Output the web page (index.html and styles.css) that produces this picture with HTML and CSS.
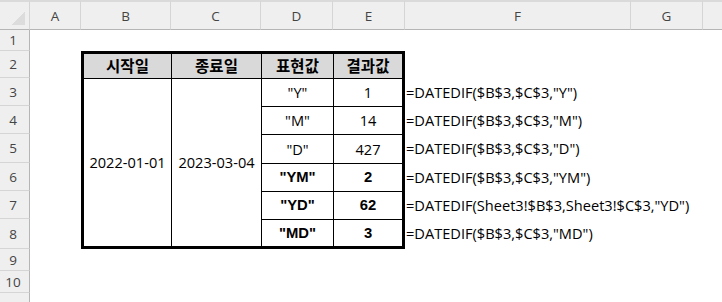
FILE: index.html
```html
<!DOCTYPE html>
<html lang="ko">
<head>
<meta charset="utf-8">
<link rel="stylesheet" href="styles.css">
</head>
<body>
<div class="sheet">
  <div class="corner"></div>
  <div class="colh">A</div>
  <div class="colh">B</div>
  <div class="colh">C</div>
  <div class="colh">D</div>
  <div class="colh">E</div>
  <div class="colh">F</div>
  <div class="colh">G</div>
  <div class="colh last"></div>

  <div class="rowh r1">1</div>
  <div class="rowh r2">2</div>
  <div class="rowh r3">3</div>
  <div class="rowh r4">4</div>
  <div class="rowh r5">5</div>
  <div class="rowh r6">6</div>
  <div class="rowh r7">7</div>
  <div class="rowh r8">8</div>
  <div class="rowh r9">9</div>
  <div class="rowh r10">10</div>
  <div class="rowh r11"></div>

  <div class="datatable">
    <div class="th">시작일</div>
    <div class="th">종료일</div>
    <div class="th">표현값</div>
    <div class="th">결과값</div>
    <div class="td merged">2022-01-01</div>
    <div class="td merged">2023-03-04</div>
    <div class="td">"Y"</div><div class="td">1</div>
    <div class="td">"M"</div><div class="td">14</div>
    <div class="td">"D"</div><div class="td">427</div>
    <div class="td b">"YM"</div><div class="td b">2</div>
    <div class="td b">"YD"</div><div class="td b">62</div>
    <div class="td b">"MD"</div><div class="td b">3</div>
  </div>

  <div class="formula f3">=DATEDIF($B$3,$C$3,"Y")</div>
  <div class="formula f4">=DATEDIF($B$3,$C$3,"M")</div>
  <div class="formula f5">=DATEDIF($B$3,$C$3,"D")</div>
  <div class="formula f6">=DATEDIF($B$3,$C$3,"YM")</div>
  <div class="formula f7">=DATEDIF(Sheet3!$B$3,Sheet3!$C$3,"YD")</div>
  <div class="formula f8">=DATEDIF($B$3,$C$3,"MD")</div>
</div>
</body>
</html>
```

FILE: styles.css
```css
html, body {
  margin: 0;
  padding: 0;
  background: #ffffff;
}
body {
  width: 722px;
  height: 302px;
  overflow: hidden;
  font-family: "Open Sans", "Noto Sans CJK KR", sans-serif;
  color: #000;
}
.sheet {
  display: grid;
  grid-template-columns: 30px 51px 90px 90px 72px 72px 226px 72px 1fr;
  grid-template-rows: 30px 21px 27px 28px 28px 29px 28px 28px 30px 22px 22px 1fr;
  height: 302px;
}
.corner {
  grid-column: 1;
  grid-row: 1;
  background-color: #efefef;
  background-image: linear-gradient(to bottom right, transparent 50%, #dcdcdc 50%);
  background-size: 14px 14px;
  background-position: right 4px bottom 4px;
  background-repeat: no-repeat;
  border-top: 2px solid #dadada;
  border-right: 1px solid #d5d5d5;
  border-bottom: 1px solid #b5b5b5;
}
.colh {
  grid-row: 1;
  background: #efefef;
  border-top: 2px solid #dadada;
  border-right: 1px solid #d5d5d5;
  border-bottom: 1px solid #b5b5b5;
  color: #444;
  font-size: 13.5px;
  display: flex;
  align-items: center;
  justify-content: center;
  padding-top: 1px;
}
.colh.last { border-right: none; }
.rowh {
  grid-column: 1;
  background: #efefef;
  border-right: 1px solid #b5b5b5;
  border-bottom: 1px solid #d5d5d5;
  color: #444;
  font-size: 13.5px;
  display: flex;
  align-items: center;
  justify-content: center;
  padding-right: 3px;
}
.rowh.r11 { border-bottom: none; }
.datatable {
  grid-column: 3 / 7;
  grid-row: 3 / 10;
  display: grid;
  grid-template-columns: 87px 89px 71px 1fr;
  grid-template-rows: 24px 27px 27px 28px 27px 27px 1fr;
  gap: 1px;
  background: #000;
  border: 3px solid #000;
}
.th {
  background: #d9d9d9;
  font-family: "Noto Sans CJK KR", sans-serif;
  font-weight: 700;
  font-size: 15.5px;
  display: flex;
  align-items: center;
  justify-content: center;
  line-height: 1;
}
.td {
  background: #fff;
  font-size: 14.6px;
  display: flex;
  align-items: center;
  justify-content: center;
  line-height: 1;
}
.td.merged { grid-row: span 6; }
.td.merged + .td.merged { grid-column: 2; grid-row: 2 / span 6; }
.td.merged:first-of-type { grid-column: 1; }
.td.b {
  font-family: "Liberation Sans", sans-serif;
  font-weight: 700;
  font-size: 14.8px;
}
.formula {
  grid-column: 7;
  font-size: 14.6px;
  white-space: nowrap;
  display: flex;
  align-items: center;
  padding-left: 1px;
  line-height: 1;
}
.f3 { grid-row: 4; }
.f4 { grid-row: 5; }
.f5 { grid-row: 6; }
.f6 { grid-row: 7; }
.f7 { grid-row: 8; }
.f8 { grid-row: 9; padding-bottom: 2px; }
```
